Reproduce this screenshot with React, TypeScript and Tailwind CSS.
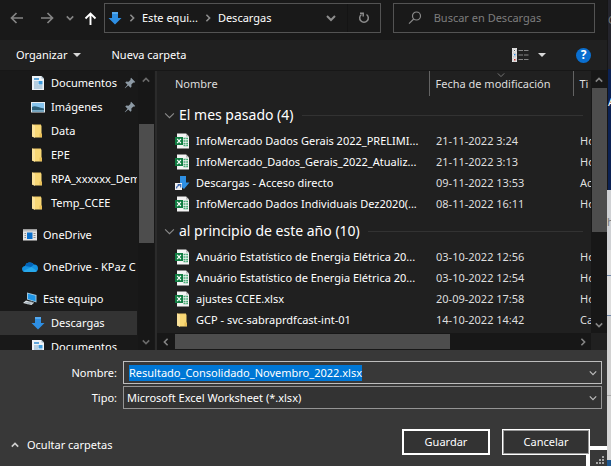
import { useEffect, useRef, type ReactNode } from "react";

type IconKind = "excel" | "shortcut" | "folder";

interface FileEntry {
  icon: IconKind;
  name: string;
  date: string;
  type: string;
}

const groups: { title: string; files: FileEntry[] }[] = [
  {
    title: "El mes pasado (4)",
    files: [
      { icon: "excel", name: "InfoMercado Dados Gerais 2022_PRELIMI...", date: "21-11-2022 3:24", type: "Ho" },
      { icon: "excel", name: "InfoMercado_Dados_Gerais_2022_Atualiz...", date: "21-11-2022 3:13", type: "Ho" },
      { icon: "shortcut", name: "Descargas - Acceso directo", date: "09-11-2022 13:53", type: "Ac" },
      { icon: "excel", name: "InfoMercado Dados Individuais Dez2020(...", date: "08-11-2022 16:11", type: "Ho" },
    ],
  },
  {
    title: "al principio de este año (10)",
    files: [
      { icon: "excel", name: "Anuário Estatístico de Energia Elétrica 20...", date: "03-10-2022 12:56", type: "Ho" },
      { icon: "excel", name: "Anuário Estatístico de Energia Elétrica 20...", date: "03-10-2022 12:54", type: "Ho" },
      { icon: "excel", name: "ajustes CCEE.xlsx", date: "20-09-2022 17:58", type: "Ho" },
      { icon: "folder", name: "GCP - svc-sabraprdfcast-int-01", date: "14-10-2022 14:42", type: "Ca" },
    ],
  },
];

function Chevron({ dir, className = "", size = 8, width = 1.5 }: { dir: "up" | "down" | "left" | "right"; className?: string; size?: number; width?: number }) {
  const paths = {
    up: "M1 7 5 3 9 7",
    down: "M1 3 5 7 9 3",
    left: "M7 1 3 5 7 9",
    right: "M3 1 7 5 3 9",
  };
  return (
    <svg width={size} height={size} viewBox="0 0 10 10" fill="none" stroke="currentColor" strokeWidth={width} className={`shrink-0 ${className}`} aria-hidden="true">
      <path d={paths[dir]} />
    </svg>
  );
}

function Svg({ children, size = 16, className = "" }: { children: ReactNode; size?: number; className?: string }) {
  return (
    <svg width={size} height={size} viewBox="0 0 16 16" className={`shrink-0 ${className}`} aria-hidden="true">
      {children}
    </svg>
  );
}

function DownloadIcon({ size = 16 }: { size?: number }) {
  return (
    <Svg size={size}>
      <path d="M5 2h6v6h3.500L8 14.500 1.500 8H5z" fill="#2e8fe3" />
      <path d="M5 2h6v2H5z" fill="#55a9ee" />
    </Svg>
  );
}

function FolderIcon() {
  return (
    <Svg>
      <path d="M2 1.500h9v12H2z" fill="#f0ca68" />
      <path d="M2 1.500 5 2.500V15l-3-1.500z" fill="#fbe29a" />
      <path d="M5 2.500h6.500V11H12v3.500H5z" fill="#f8d775" />
      <path d="M9.500 10.500H12v3.500H9.500z" fill="#e9bf58" />
    </Svg>
  );
}

function ExcelIcon() {
  return (
    <Svg>
      <path d="M2 .5h9L14 3.500v12H2z" fill="#f4f4f4" />
      <path d="M11 .5v3h3z" fill="#bdbdbd" />
      <path d="M8.500 5.500H13M8.500 8H13M8.500 10.500H13M8.500 12.500H13" stroke="#45a873" strokeWidth="1.300" />
      <path d="M10.800 5v8" stroke="#fff" strokeWidth=".6" />
      <path d="M0 4h8v8H0z" fill="#107c41" />
      <path d="m2.200 5.800 3.700 4.400m0-4.400-3.700 4.400" stroke="#fff" strokeWidth="1.200" />
    </Svg>
  );
}

function ShortcutIcon() {
  return (
    <Svg>
      <path d="M5 1h6v6.500h3.500L9 14 2 8h3z" fill="#2e8fe3" />
      <path d="M0 8h7v7H0z" fill="#f1f1f1" />
      <path d="M1.500 13.500c0-2 1-3 3-3M2.700 9.600h3v3" stroke="#3a66b0" strokeWidth="1.200" fill="none" />
    </Svg>
  );
}

function DocumentIcon() {
  return (
    <Svg>
      <path d="M2 1h9.500L14 3.500V15H2z" fill="#eef3f7" />
      <path d="M11.500 1v2.500H14z" fill="#9fb3c2" />
      <path d="M4 4h5" stroke="#2f8bd0" strokeWidth="1.500" />
      <path d="M4 7h4M4 9h4M4 11h8.500M4 13h8.500" stroke="#7da8c8" />
      <path d="M8.500 6h4v3.500h-4z" fill="#3d9bdc" />
    </Svg>
  );
}

function PictureIcon() {
  return (
    <Svg>
      <path d="M1 3h14v10.500H1z" fill="#e8edf1" />
      <path d="M2 4h12v8.500H2z" fill="#86c3ec" />
      <path d="M2 8c3-2 5 0 12 1.500v3H2z" fill="#2d5f78" />
      <path d="M2 11h12v1.500H2z" fill="#77a9c4" />
    </Svg>
  );
}

function AppWindowIcon() {
  return (
    <Svg>
      <path d="M1 2.500h14v11H1z" fill="#e4e4e4" />
      <path d="M1 2.500h14v2H1z" fill="#bdbdbd" />
      <path d="M5 5.500h5.500v6.500H5z" fill="#0a6fcb" />
      <path d="M2.500 6.500h1.500m-1.500 2h1.500m-1.500 2h1.500m7.500-4h2m-2 2h2m-2 2h2" stroke="#8d8d8d" />
    </Svg>
  );
}

function CloudIcon() {
  return (
    <Svg>
      <path d="M3 7a5 4.500 0 0 1 9-1.500A4 4 0 0 1 16 9.500c0 2-1.500 3.500-3.500 3.500h-9A3.300 3.300 0 0 1 0 10c0-1.600 1.300-3 3-3z" fill="#1490df" />
      <path d="M3 7a5 4.500 0 0 1 9-1.500L9 8z" fill="#0364b8" />
      <path d="M1 12 9.500 8 15 12a3 3 0 0 1-2.500 1h-9A3.200 3.200 0 0 1 1 12z" fill="#28a8ea" />
    </Svg>
  );
}

function ComputerIcon() {
  return (
    <Svg>
      <path d="M5 1.500 14.500 4v7.500L5 8.500z" fill="#9fc6dc" />
      <path d="M6 2.700 13.500 4.700v5.600L6 8z" fill="#1e96e8" />
      <path d="M4 9.500 12 11.800 9.500 14 1 12z" fill="#dce3e8" />
      <path d="m3 12 7-1.300M5 13l7-1.500" stroke="#8a979f" strokeWidth=".7" />
    </Svg>
  );
}

function PinIcon() {
  return (
    <Svg size={12}>
      <path d="m9.500 1 5.500 5.500-1.500 1-1-.3-2.700 2.700.2 3.100L8.700 14.300 5.700 11.300 1.500 15 1 14.500 4.700 10.300 1.700 7.300 3 6l3.100.2 2.700-2.700-.3-1z" fill="#8d9aa5" />
    </Svg>
  );
}

const fileIcons: Record<IconKind, ReactNode> = {
  excel: <ExcelIcon />,
  shortcut: <ShortcutIcon />,
  folder: <FolderIcon />,
};

function TreeRow({ icon, label, root, pinned, selected }: { icon: ReactNode; label: string; root?: boolean; pinned?: boolean; selected?: boolean }) {
  return (
    <li className={root ? "mt-2" : ""}>
      <a
        href="#"
        className={`flex h-6 items-center gap-[5px] whitespace-nowrap ${root ? "pl-[22px]" : "pl-[30px]"} ${selected ? "bg-[#333333]" : ""}`}
      >
        {icon}
        <span className={pinned ? "w-[68px]" : ""}>{label}</span>
        {pinned && <PinIcon />}
      </a>
    </li>
  );
}

export default function App() {
  const nameRef = useRef<HTMLInputElement>(null);

  useEffect(() => {
    nameRef.current?.focus();
    nameRef.current?.select();
  }, []);

  return (
    <div className="flex overflow-hidden bg-[#191919] font-['Noto_Sans','Open_Sans',sans-serif] text-[11px] leading-4 text-white">
      <main className="min-w-0 flex-1">
        <header className="flex h-10 items-start gap-3 pr-3 pt-[3px]">
          <div className="flex min-w-0 flex-1 items-center">
            <nav className="flex w-[104px] shrink-0 items-center pl-2 text-[#858585]">
              <button aria-label="Atrás" className="w-[30px] pl-[2px]">
                <svg width="14" height="12" viewBox="0 0 14 12" fill="none" stroke="currentColor" strokeWidth="1.700"><path d="M13 6H2M6.500 1 1.500 6l5 5" /></svg>
              </button>
              <button aria-label="Adelante" className="w-[28px] pl-[2px]">
                <svg width="14" height="12" viewBox="0 0 14 12" fill="none" stroke="currentColor" strokeWidth="1.700"><path d="M1 6h11M7.500 1l5 5-5 5" /></svg>
              </button>
              <button aria-label="Recientes" className="w-[18px]"><Chevron dir="down" width={2} /></button>
              <button aria-label="Subir" className="text-white">
                <svg width="13" height="13" viewBox="0 0 13 13" fill="none" stroke="currentColor" strokeWidth="1.900"><path d="M6.500 13V2M1.500 6.500l5-5 5 5" /></svg>
              </button>
            </nav>
            <div className="flex h-[30px] min-w-0 flex-1 items-center border border-[#535353] text-[#8d8d8d]">
              <span className="pl-[2px]"><DownloadIcon /></span>
              <Chevron dir="right" className="ml-[5px]" width={2} />
              <button className="ml-[6px] whitespace-nowrap text-white">Este equi...</button>
              <Chevron dir="right" className="ml-[6px]" width={2} />
              <button className="ml-[6px] flex-1 text-left text-white">Descargas</button>
              <button aria-label="Ubicaciones anteriores" className="flex h-full w-8 items-center justify-center border-r border-[#141414]"><Chevron dir="down" size={10} width={2} /></button>
              <button aria-label="Actualizar" className="flex w-8 items-center justify-center">
                <svg width="12" height="12" viewBox="0 0 12 12" fill="none" stroke="currentColor" strokeWidth="1.500"><path d="M8.500 2.500a4.300 4.300 0 1 1-5 0M2 1.200h3.200v3.300" /></svg>
              </button>
            </div>
          </div>
          <label className="flex h-[30px] w-[34%] items-center gap-3 border border-[#535353] pl-[14px] text-[#8a8a8a]">
            <svg width="14" height="14" viewBox="0 0 14 14" fill="none" stroke="currentColor" strokeWidth="1.200" aria-hidden="true"><circle cx="8.500" cy="5" r="4" /><path d="M5.700 8 1 12.700" /></svg>
            <input aria-label="Buscar en Descargas" placeholder="Buscar en Descargas" className="min-w-0 flex-1 bg-transparent outline-none placeholder:text-[#7d7d7d]" />
          </label>
        </header>

        <div className="flex h-[31px] items-center border-b border-[#171717] bg-[#202020] pl-4 pr-4">
          <button className="flex items-center gap-[6px]">
            Organizar
            <svg width="8" height="4" viewBox="0 0 8 4" fill="#d8d8d8" aria-hidden="true"><path d="M0 0h8L4 4z" /></svg>
          </button>
          <button className="ml-[30px]">Nueva carpeta</button>
          <button aria-label="Cambiar la vista" className="ml-auto flex items-center gap-[9px]">
            <svg width="17" height="14" viewBox="0 0 17 14" aria-hidden="true">
              <path d="M0 0h5v14H0z" fill="#e6e6e6" />
              <path d="M1 1h3v3H1zM1 5.500h3v3H1zM1 10h3v3H1z" fill="#fff" stroke="#aaa" strokeWidth=".5" />
              <path d="M2 2h1v1H2z" fill="#555" /><path d="M2 6h1.500v1.500H2z" fill="#2b83d8" /><path d="M2 11h1.500v1.500H2z" fill="#c32e2e" />
              <path d="M6.500 2.500H11M12 2.500h4.500M6.500 7H11M12 7h4.500M6.500 11.500H11M12 11.500h4.500" stroke="#858585" />
            </svg>
            <svg width="8" height="4" viewBox="0 0 8 4" fill="#d8d8d8" aria-hidden="true"><path d="M0 0h8L4 4z" /></svg>
          </button>
          <button aria-label="Ayuda" className="ml-[30px] flex size-[15px] items-center justify-center rounded-full bg-[#0a6fd0] text-xs font-bold">?</button>
        </div>

        <div className="flex h-[279px]">
          <aside className="flex w-[155px] shrink-0 overflow-hidden pr-px">
            <ul className="min-w-0 flex-1 overflow-hidden">
              <TreeRow icon={<DocumentIcon />} label="Documentos" pinned />
              <TreeRow icon={<PictureIcon />} label="Imágenes" pinned />
              <TreeRow icon={<FolderIcon />} label="Data" />
              <TreeRow icon={<FolderIcon />} label="EPE" />
              <TreeRow icon={<FolderIcon />} label="RPA_xxxxxx_Dem" />
              <TreeRow icon={<FolderIcon />} label="Temp_CCEE" />
              <TreeRow icon={<AppWindowIcon />} label="OneDrive" root />
              <TreeRow icon={<CloudIcon />} label="OneDrive - KPaz C" root />
              <TreeRow icon={<ComputerIcon />} label="Este equipo" root />
              <TreeRow icon={<DownloadIcon />} label="Descargas" selected />
              <TreeRow icon={<DocumentIcon />} label="Documentos" />
            </ul>
            <div className="ml-px flex w-4 shrink-0 flex-col items-center bg-[#171717] text-[#6a6a6a]">
              <Chevron dir="up" className="my-[5px]" width={2} />
              <div className="mt-[35px] h-[119px] w-[15px] bg-[#4d4d4d]" />
              <Chevron dir="down" className="mb-1 mt-auto" width={2} />
            </div>
          </aside>

          <section className="flex min-w-0 flex-1 flex-col border-l-2 border-[#2b2b2b] bg-[#202020]">
            <div className="flex min-h-0 flex-1">
              <div className="min-w-0 flex-1 overflow-hidden">
                <table className="w-full table-fixed border-collapse text-[#dedede]">
                  <colgroup>
                    <col />
                    <col className="w-36" />
                    <col className="w-[18px]" />
                  </colgroup>
                  <thead>
                    <tr className="h-[25px] text-left">
                      <th className="p-0 pl-[18px] font-normal">Nombre</th>
                      <th className="relative border-l border-[#636363] p-0 pl-[6px] font-normal">
                        <Chevron dir="down" className="absolute left-1/2 top-0 -translate-x-1/2 text-[#8a8a8a]" width={1} />
                        Fecha de modificación
                      </th>
                      <th className="overflow-hidden whitespace-nowrap border-l border-[#636363] p-0 pl-[6px] font-normal">Ti</th>
                    </tr>
                  </thead>
                  {groups.map((group, index) => (
                    <tbody key={group.title}>
                      <tr className={index === 0 ? "h-[34px]" : "h-8"}>
                        <th colSpan={3} className="p-0 pl-[7px] pr-2 text-left font-normal text-white">
                          <button className={`flex w-full items-center gap-1 text-sm leading-5 ${index === 0 ? "mt-1" : "mt-[2px]"}`}>
                            <Chevron dir="down" size={11} width={1} className="text-[#8a8a8a]" />
                            {group.title}
                            <span className="ml-1 h-px flex-1 bg-[#323232]" />
                          </button>
                        </th>
                      </tr>
                      {group.files.map((file, row) => (
                        <tr key={row} className="h-[21px] whitespace-nowrap">
                          <td className="p-0 pl-[18px] text-white">
                            <span className="flex items-center gap-[5px]">{fileIcons[file.icon]}{file.name}</span>
                          </td>
                          <td className="p-0 pl-[7px]">{file.date}</td>
                          <td className="overflow-hidden p-0 pl-[7px]">{file.type}</td>
                        </tr>
                      ))}
                    </tbody>
                  ))}
                </table>
              </div>
              <div className="flex w-4 shrink-0 flex-col items-center bg-[#171717] text-[#858585]">
                <Chevron dir="up" className="mb-1 mt-[5px]" width={2} />
                <div className="h-36 w-[15px] bg-[#4d4d4d]" />
                <Chevron dir="down" className="mb-1 mt-auto" width={2} />
              </div>
            </div>
            <div className="flex h-[17px] shrink-0 items-center bg-[#171717] text-[#858585]">
              <Chevron dir="left" className="mx-[5px]" width={2} />
              <div className="h-[15px] w-[275px] bg-[#4d4d4d]" />
              <Chevron dir="right" className="ml-auto mr-1" width={2} />
              <div className="h-full w-4 bg-[#202020]" />
            </div>
          </section>
        </div>

        <form className="relative bg-[#383838] pt-[11px]" onSubmit={(event) => event.preventDefault()}>
          <div className="mr-[5px] grid grid-cols-[117px_1fr] items-center gap-x-[6px] gap-y-[2px]">
            <label htmlFor="file-name" className="text-right">Nombre:</label>
            <div className="flex h-[23px] items-center border border-[#bdbdbd] pl-[5px] pr-1">
              <input
                id="file-name"
                ref={nameRef}
                defaultValue="Resultado_Consolidado_Novembro_2022.xlsx"
                className="min-w-0 flex-1 bg-transparent outline-none selection:bg-[#0078d7fd] selection:text-white"
              />
              <Chevron dir="down" className="text-[#bdbdbd]" width={1.5} />
            </div>
            <label htmlFor="file-type" className="text-right">Tipo:</label>
            <div className="flex h-[23px] items-center border border-[#949494] bg-[#333333] pl-[3px] pr-1">
              <select id="file-type" className="min-w-0 flex-1 appearance-none bg-transparent outline-none">
                <option>Microsoft Excel Worksheet (*.xlsx)</option>
              </select>
              <Chevron dir="down" className="text-[#bdbdbd]" width={1.5} />
            </div>
          </div>
          <div className="flex h-[57px] items-start gap-3 pr-[17px] pt-5">
            <button type="button" className="mr-auto mt-2 flex items-center gap-2 pl-[11px]">
              <Chevron dir="up" className="text-[#d0d0d0]" width={2} />
              Ocultar carpetas
            </button>
            <button type="submit" className="h-[26px] w-[88px] border-2 border-white bg-[#333333]">Guardar</button>
            <button type="button" className="z-10 h-[26px] w-[88px] border border-white bg-[#333333] ring-1 ring-inset ring-[#999]">Cancelar</button>
          </div>
          <div className="absolute bottom-0 right-0 flex h-5 w-[21px] items-end justify-end border-l-4 border-t-4 border-white bg-[#383838]">
            <svg width="12" height="10" viewBox="0 0 12 10" fill="#a5a5a5" aria-hidden="true">
              <path d="M7 0h2v2H7zM4 3h2v2H4zM7 3h2v2H7zM1 6h2v2H1zM4 6h2v2H4zM7 6h2v2H7z" />
            </svg>
          </div>
        </form>
      </main>

      <div className="flex w-1 shrink-0 flex-col overflow-hidden bg-[#d5d5d5]">
        <div className="h-[69px] border-l border-[#161616] bg-[#24242c] pt-3 text-[#777]">C</div>
        <div className="h-[121px] border-l border-[#161616] bg-[#0c2254] pt-[25px]">A</div>
        <div className="h-[60px] bg-[#cfd1d4] pt-6 text-[#777]">h</div>
        <div className="h-[26px] border-b border-[#7187a8] bg-[#dedede]" />
        <div className="h-[40px] border-b border-[#7187a8] bg-[#dedede]" />
        <div className="h-[80px] border-b border-[#aaa] bg-[#d2d2d2]" />
        <div className="mt-auto h-[6px] bg-[#1d568e]" />
      </div>
    </div>
  );
}
